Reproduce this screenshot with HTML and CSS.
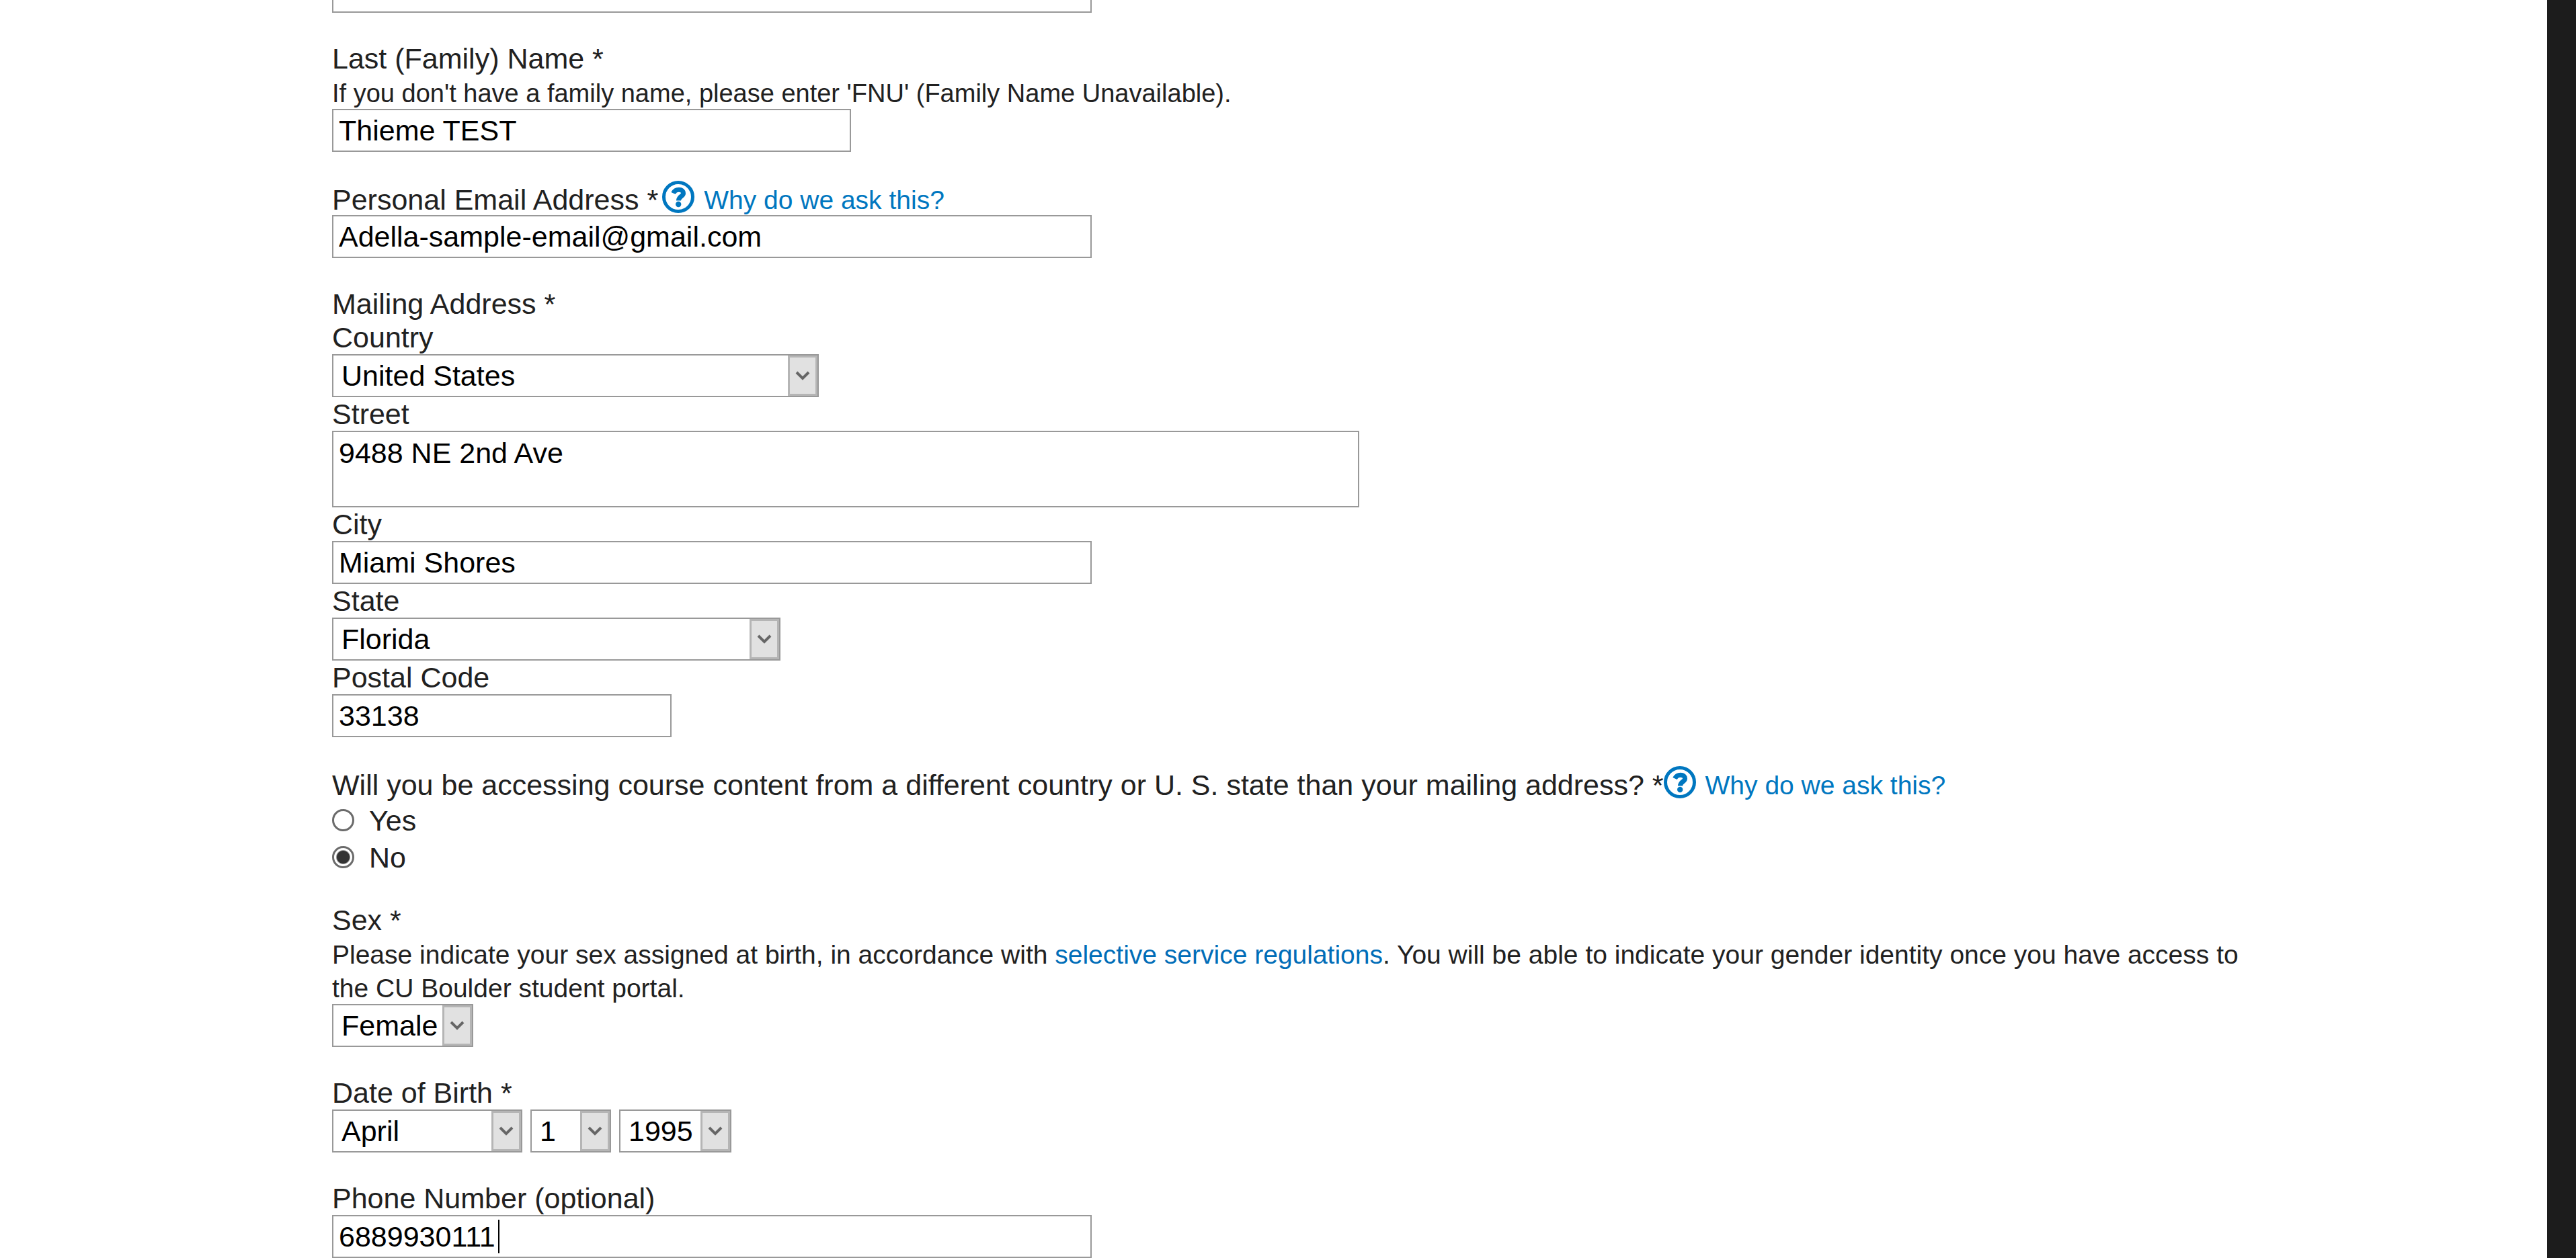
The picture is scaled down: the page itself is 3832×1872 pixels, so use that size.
FILE: index.html
```html
<!DOCTYPE html>
<html lang="en">
<head>
<meta charset="utf-8">
<title>Application - Personal Information</title>
<link rel="stylesheet" href="styles.css">
</head>
<body>
<svg class="defs" aria-hidden="true">
  <symbol id="chevron" viewBox="0 0 22 14"><path d="M2 2L11 11L20 2" fill="none" stroke="#666" stroke-width="4"/></symbol>
  <symbol id="help" viewBox="0 0 48 48">
    <circle cx="24" cy="24" r="21.5" fill="none" stroke="#0077c0" stroke-width="5"/>
    <path d="M16.500 18.500C18.500 14.500 21.500 13.200 25 13.200C29 13.200 31.500 15.500 31.500 18.500C31.500 23.500 24.500 23 24.500 29.500" fill="none" stroke="#0077c0" stroke-width="7"/>
    <circle cx="24.200" cy="35" r="4.200" fill="#0077c0"/>
  </symbol>
</svg>
<main class="page">
  <form class="form">
    <div class="field">
      <input class="box" type="text" aria-label="Middle Name">
    </div>

    <div class="field">
      <label class="line" for="last">Last (Family) Name *</label>
      <p class="hint hint-compact">If you don't have a family name, please enter 'FNU' (Family Name Unavailable).</p>
      <input class="box box-name" id="last" type="text" value="Thieme TEST">
    </div>

    <div class="field">
      <div class="help-line">
        <label class="line" for="email">Personal Email Address *</label>
        <a class="help help-spaced" href="#why-email"><svg class="help-icon"><use href="#help"/></svg>Why do we ask this?</a>
      </div>
      <input class="box" id="email" type="text" value="Adella-sample-email@gmail.com">
    </div>

    <div class="field">
      <div class="line">Mailing Address *</div>
      <label class="line" for="country">Country</label>
      <div class="pick pick-country">
        <select class="box" id="country"><option>United States</option></select>
        <span class="arrow"><svg class="chevron"><use href="#chevron"/></svg></span>
      </div>
      <label class="line" for="street">Street</label>
      <textarea class="box box-street" id="street">9488 NE 2nd Ave</textarea>
      <label class="line" for="city">City</label>
      <input class="box" id="city" type="text" value="Miami Shores">
      <label class="line" for="state">State</label>
      <div class="pick pick-state">
        <select class="box" id="state"><option>Florida</option></select>
        <span class="arrow"><svg class="chevron"><use href="#chevron"/></svg></span>
      </div>
      <label class="line" for="postal">Postal Code</label>
      <input class="box box-postal" id="postal" type="text" value="33138">
    </div>

    <div class="field" role="radiogroup" aria-labelledby="access">
      <div class="help-line">
        <span class="line" id="access">Will you be accessing course content from a different country or U. S. state than your mailing address? *</span>
        <a class="help" href="#why-access"><svg class="help-icon"><use href="#help"/></svg>Why do we ask this?</a>
      </div>
      <label class="choice"><input class="radio" type="radio" name="access">Yes</label>
      <label class="choice"><input class="radio" type="radio" name="access" checked>No</label>
    </div>

    <div class="field">
      <label class="line" for="sex">Sex *</label>
      <p class="hint">Please indicate your sex assigned at birth, in accordance with <a href="#regulations">selective service regulations</a>. You will be able to indicate your gender identity once you have access to the CU Boulder student portal.</p>
      <div class="pick pick-sex">
        <select class="box" id="sex"><option>Female</option></select>
        <span class="arrow"><svg class="chevron"><use href="#chevron"/></svg></span>
      </div>
    </div>

    <div class="field">
      <label class="line" for="month">Date of Birth *</label>
      <div class="dates">
        <div class="pick pick-month">
          <select class="box" id="month"><option>April</option></select>
          <span class="arrow"><svg class="chevron"><use href="#chevron"/></svg></span>
        </div>
        <div class="pick pick-day">
          <select class="box" aria-label="Day"><option>1</option></select>
          <span class="arrow"><svg class="chevron"><use href="#chevron"/></svg></span>
        </div>
        <div class="pick pick-year">
          <select class="box" aria-label="Year"><option>1995</option></select>
          <span class="arrow"><svg class="chevron"><use href="#chevron"/></svg></span>
        </div>
      </div>
    </div>

    <div class="field">
      <label class="line" for="phone">Phone Number (optional)</label>
      <div class="phone">
        <input class="box" id="phone" type="text" value="6889930111">
        <span class="caret"></span>
      </div>
    </div>
  </form>
</main>
</body>
</html>
```
FILE: styles.css
```css
* { box-sizing: border-box; }

body {
  margin: 0;
  background: #fff;
  color: #212121;
  font: 43px/50px "Liberation Sans", Arial, sans-serif;
}

.defs { position: absolute; width: 0; height: 0; }

a { color: #006db8; text-decoration: none; }

.page {
  min-height: 100vh;
  border-right: 43px solid #1c1c1c;
  padding: 0 440px 0 494px;
  overflow: hidden;
}

.form {
  display: flex;
  flex-direction: column;
  gap: 43px;
  margin-top: -45px;
}

.field {
  display: flex;
  flex-direction: column;
  align-items: flex-start;
}

.line { display: block; white-space: nowrap; }

.hint { margin: 0 0 -2px; padding-top: 2px; font-size: 39px; }
.hint-compact { font-size: 38px; }

.box {
  display: block;
  width: 1130px;
  max-width: 100%;
  height: 64px;
  margin: 0;
  padding: 0 8px;
  border: 2px solid #999;
  border-radius: 0;
  outline: none;
  background: #fff;
  color: #000;
  font: inherit;
  appearance: none;
}

.box-name { width: 772px; }
.box-postal { width: 505px; }
.box-street { width: 1528px; height: 114px; padding: 6px 8px; resize: none; overflow: hidden; }

.pick { position: relative; }
.pick .box { width: 100%; padding: 0 12px; }
.pick-country { width: 724px; }
.pick-state { width: 667px; }
.pick-sex { width: 210px; }
.pick-month { width: 283px; }
.pick-day { width: 120px; }
.pick-year { width: 167px; }

.arrow {
  position: absolute;
  top: 2px;
  right: 2px;
  bottom: 2px;
  width: 44px;
  display: grid;
  place-items: center;
  border: 3px solid #b5b5b5;
  background: #e1e1e1;
  pointer-events: none;
}

.chevron { width: 22px; height: 14px; }

.dates { display: flex; gap: 12px; }

.help-line {
  display: flex;
  align-items: flex-end;
  height: 51px;
  line-height: 46px;
}

.help {
  display: flex;
  align-items: flex-end;
  gap: 14px;
  color: #0077c0;
  font-size: 39px;
  line-height: 44px;
  white-space: nowrap;
}

.help-spaced { margin-left: 6px; }

.help-icon { width: 48px; height: 48px; margin-bottom: 3px; }

.choice {
  display: flex;
  align-items: center;
  gap: 22px;
  height: 55px;
  padding-top: 5px;
}

.radio {
  appearance: none;
  width: 33px;
  height: 33px;
  margin: 0 0 2px;
  border: 3px solid #6b6b6b;
  border-radius: 50%;
  background: #fff;
}

.radio:checked { background: radial-gradient(circle, #333 9px, #fff 11px); }

.phone { position: relative; width: 100%; }

.caret {
  position: absolute;
  left: 247px;
  top: 7px;
  width: 2px;
  height: 50px;
  background: #000;
}
```
